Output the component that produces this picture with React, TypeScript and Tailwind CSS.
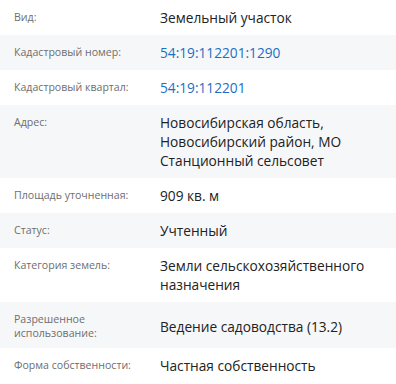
import type { ReactNode } from "react";

type Row = {
  label: ReactNode;
  value: ReactNode;
  link?: boolean;
  center?: boolean;
};

const ROWS: Row[] = [
  { label: "Вид:", value: "Земельный участок" },
  { label: "Кадастровый номер:", value: "54:19:112201:1290", link: true },
  { label: "Кадастровый квартал:", value: "54:19:112201", link: true },
  {
    label: "Адрес:",
    value: (
      <>
        Новосибирская область,
        <br />
        Новосибирский район, МО
        <br />
        Станционный сельсовет
      </>
    ),
  },
  { label: "Площадь уточненная:", value: "909 кв. м" },
  { label: "Статус:", value: "Учтенный" },
  {
    label: (
      <>
        Категория земель:
      </>
    ),
    value: (
      <>
        Земли сельскохозяйственного
        <br />
        назначения
      </>
    ),
  },
  {
    label: (
      <>
        Разрешенное
        <br />
        использование:
      </>
    ),
    value: "Ведение садоводства (13.2)",
    center: true,
  },
  { label: "Форма собственности:", value: "Частная собственность" },
];

export default function App() {
  return (
    <div className="w-[396px] h-[384px] overflow-hidden bg-white font-['Open_Sans',sans-serif]">
      {ROWS.map((row, i) => (
        <div
          key={i}
          className={`flex items-start py-2 ${i % 2 === 1 ? "bg-[#f6f7f9]" : "bg-white"}`}
        >
          <div className="w-[160px] shrink-0 pl-[14px] pt-[2px] text-[10.6px] leading-[14px] text-[#6e6e6e]">
            {row.label}
          </div>
          <div
            className={`flex-1 text-[13.7px] leading-[19px] ${
              row.link ? "text-[#1a6fc4]" : "text-[#222]"
            } ${row.center ? "self-center pt-[2px]" : ""}`}
          >
            {row.value}
          </div>
        </div>
      ))}
    </div>
  );
}
